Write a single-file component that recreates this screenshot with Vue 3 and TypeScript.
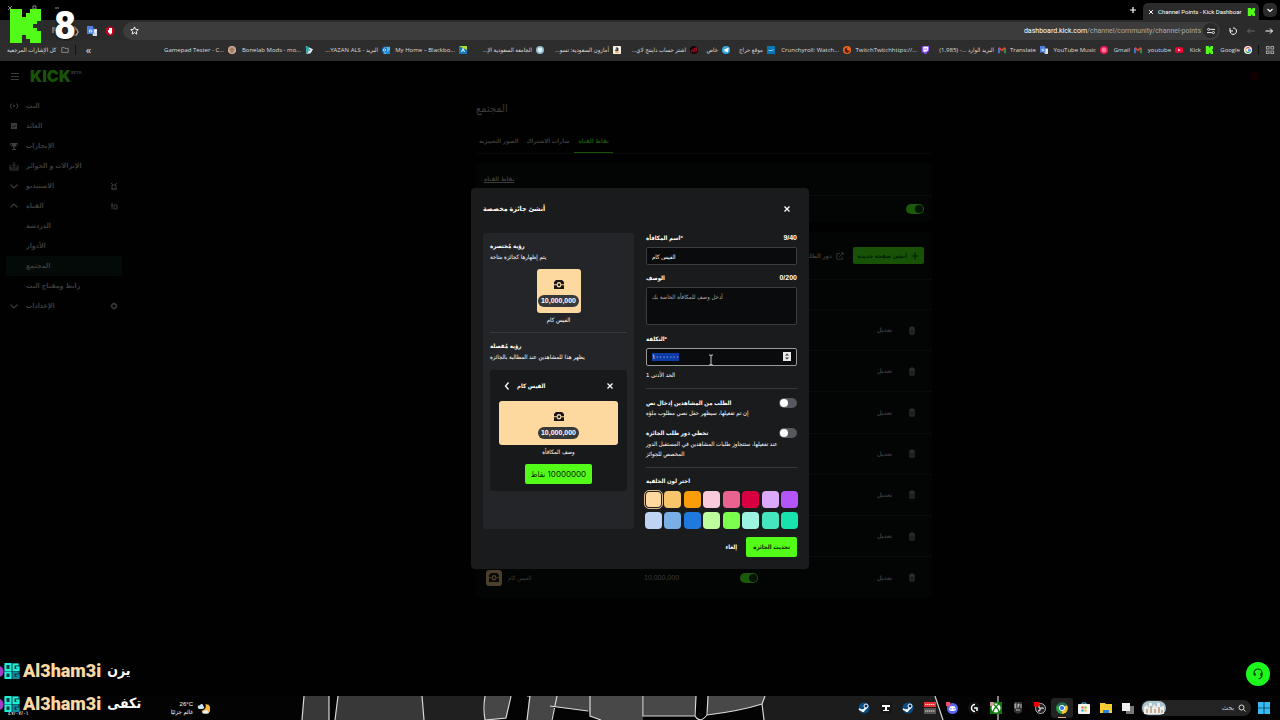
<script setup lang="ts">
import { onMounted, ref } from 'vue'

interface Bookmark { label: string; width: number; icon: string; rtl?: boolean }
interface NavItem { label: string; icon?: string; tail?: string; active?: boolean }
interface Reward { name: string; cost: string }

const bookmarks: Bookmark[] = [
  { label: 'Google', width: 33, icon: 'google' },
  { label: 'Kick', width: 24, icon: 'kick' },
  { label: 'youtube', width: 35, icon: 'youtube' },
  { label: 'Gmail', width: 28, icon: 'gmail' },
  { label: 'YouTube Music', width: 54, icon: 'music' },
  { label: 'Translate', width: 36, icon: 'translate' },
  { label: 'البريد الوارد ...- (1,985)', width: 71, icon: 'gmail', rtl: true },
  { label: 'TwitchTwitchhttps://...', width: 72, icon: 'twitch' },
  { label: 'Crunchyroll: Watch...', width: 70, icon: 'crunchy' },
  { label: 'موقع حراج', width: 39, icon: 'haraj', rtl: true },
  { label: 'خاص', width: 26, icon: 'telegram', rtl: true },
  { label: 'اشتر حساب دايننج لاي...', width: 71, icon: 'chart', rtl: true },
  { label: 'أمازون السعودية: تسو...', width: 71, icon: 'amazon', rtl: true },
  { label: 'الجامعة السعودية الإ...', width: 71, icon: 'globe', rtl: true },
  { label: 'My Home – Blackbo...', width: 71, icon: 'blackboard' },
  { label: '...YAZAN ALS - البريد', width: 71, icon: 'outlook' },
  { label: 'Bonelab Mods - mo...', width: 71, icon: 'bonelab' },
  { label: 'Gamepad Tester - C...', width: 71, icon: 'gamepad' },
]

const nav: NavItem[] = [
  { label: 'البث', icon: 'live' },
  { label: 'العائد', icon: 'card' },
  { label: 'الإنجازات', icon: 'cup' },
  { label: 'الإنزالات و الجوائز', icon: 'drop' },
  { label: 'الاستيديو', icon: 'down', tail: 'tools' },
  { label: 'القناة', icon: 'up', tail: 'people' },
  { label: 'الدردشة' },
  { label: 'الأدوار' },
  { label: 'المجتمع', active: true },
  { label: 'رابط ومفتاح البث' },
  { label: 'الإعدادات', icon: 'down', tail: 'gear' },
]

const rewards: (Reward | null)[] = [null, null, null, null, null, null, { name: 'الفيس كام', cost: '10,000,000' }]

const colours = [
  '#fdd9a0', '#f8c56b', '#f99d0b', '#f9c9dc', '#e8638f', '#d80042', '#dba8fb', '#b455f7',
  '#bfd4f4', '#79aee6', '#2079dc', '#bdff9c', '#7dff4e', '#9bf5e2', '#45e5bf', '#18e2ae',
]

const apps = ['steam', 'tee', 'steam', 'voice', 'discord', 'ghub', 'xbox', 'epic', 'obs', 'chrome', 'store', 'files', 'views']

const name = ref('الفيس كام')
const description = ref('')
const cost = ref('١٠٠٠٠٠٠٠')
const colour = ref(colours[0])
const enabled = ref(true)
const needsText = ref(false)
const skipQueue = ref(false)
const costInput = ref<HTMLInputElement | null>(null)

onMounted(() => {
  costInput.value?.focus()
  costInput.value?.select()
})
</script>

<template>
  <div class="screen">
    <svg class="defs" aria-hidden="true">
      <symbol id="k" viewBox="0 0 31 34"><path fill="currentColor" d="M0 0H12V8H16V4H20V0H31V12H27V15H23V19H27V22H31V34H20V30H16V26H12V34H0Z" /></symbol>
      <symbol id="close" viewBox="0 0 8 8"><path d="M1.500 1.500l5 5M6.500 1.500L1.500 6.500" fill="none" stroke="currentColor" stroke-width="1.300" /></symbol>
      <symbol id="chest" viewBox="0 0 10 9"><path fill="currentColor" d="M2 0H8L10 2V4.200H7.300A2.300 2.300 0 0 0 2.700 4.200H0V2ZM0 5.200H2.700A2.300 2.300 0 0 0 7.300 5.200H10V9H0Z" /><circle cx="5" cy="4.700" r="1.300" fill="currentColor" /></symbol>
      <symbol id="google" viewBox="0 0 10 10"><circle cx="5" cy="5" r="5" fill="#fff" /><g fill="none" stroke-width="1.700"><path d="M2.500 3.300A3 3 0 0 1 7.200 3" stroke="#ea4335" /><path d="M2.500 3.300A3 3 0 0 0 2.600 6.800" stroke="#fbbc05" /><path d="M2.600 6.800A3 3 0 0 0 6.800 7.300" stroke="#34a853" /><path d="M5 5H8Q8 6.500 6.800 7.300" stroke="#4285f4" /></g></symbol>
      <symbol id="kick" viewBox="0 0 10 10"><path fill="#53fc18" d="M1 0H5V2H6V1H7V0H10V4H9V6H10V10H7V9H6V8H5V10H1Z" /></symbol>
      <symbol id="youtube" viewBox="0 0 10 10"><rect y="1.500" width="10" height="7" rx="2" fill="#f03" /><path d="M4 3.500L7 5 4 6.500Z" fill="#fff" /></symbol>
      <symbol id="gmail" viewBox="0 0 10 10"><path d="M1.200 9V2.500" stroke="#4285f4" stroke-width="2" /><path d="M8.800 9V2.500" stroke="#34a853" stroke-width="2" /><path d="M1 2L5 5.500 9 2" fill="none" stroke="#ea4335" stroke-width="2" /></symbol>
      <symbol id="music" viewBox="0 0 10 10"><circle cx="5" cy="5" r="5" fill="#f0134d" /><circle cx="5" cy="5" r="2.500" fill="none" stroke="#fff" stroke-width=".7" /><path d="M4.300 3.700L6.500 5 4.300 6.300Z" fill="#fff" /></symbol>
      <symbol id="translate" viewBox="0 0 10 10"><path d="M4 3H10V10H6Z" fill="#d5dae3" /><path d="M0 0H6L8 8H0Z" fill="#4d7fe0" /><path d="M5 4H2.500V6H5V5H4M6.500 5H9.500M8 4V5L6.500 8M7 6L9 8.500" fill="none" stroke="#fff" stroke-width=".7" /></symbol>
      <symbol id="twitch" viewBox="0 0 10 10"><path d="M2 0H10V6L6 10H4V8H1V2Z" fill="#8d4fff" /><path d="M3 1H9V5L7 7H5L4 8V7H3Z" fill="#fff" /><path d="M5 3V5M7 3V5" stroke="#8d4fff" /></symbol>
      <symbol id="crunchy" viewBox="0 0 10 10"><circle cx="5" cy="5" r="5" fill="#f4661b" /><path d="M8 7A3.300 3.300 0 1 1 6 2A2 2 0 1 0 8.500 5" fill="#512006" /></symbol>
      <symbol id="haraj" viewBox="0 0 10 10"><rect width="10" height="10" fill="#0878b8" /><path d="M2 6Q3 4 4 6Q5 4 6 6Q7 4 8 5" fill="none" stroke="#cceaff" /></symbol>
      <symbol id="telegram" viewBox="0 0 10 10"><circle cx="5" cy="5" r="5" fill="#33a9df" /><path d="M1.500 5L8.500 2 7.300 8 4.500 6.500 3.500 7.500V5.700Z" fill="#fff" /></symbol>
      <symbol id="chart" viewBox="0 0 10 10"><circle cx="5" cy="5" r="5" fill="#160005" /><path d="M2 8V6M4 8V5M6 8V4M8 7V2M1 6L8 2" stroke="#d00c34" /></symbol>
      <symbol id="amazon" viewBox="0 0 10 10"><rect width="10" height="10" rx="1" fill="#f5f0e6" /><path d="M3.500 2.500H6V6.500M6 4H4.500Q3 4.300 3.500 6Q5 7 6 5" fill="none" stroke="#111" stroke-width="1.200" /><path d="M2 7.500Q5 9.500 8 7.500" fill="none" stroke="#f90" /></symbol>
      <symbol id="globe" viewBox="0 0 10 10"><circle cx="5" cy="5" r="5" fill="#8fb9c9" /><circle cx="5" cy="5" r="3" fill="#d9f0f4" /></symbol>
      <symbol id="blackboard" viewBox="0 0 10 10"><path d="M0 0H10V10H0Z" fill="#1576b8" /><path d="M0 0H10V5Z" fill="#b1df25" /><path d="M3 7.500L5 3 7 7.500M4 6H6" fill="none" stroke="#fff" /></symbol>
      <symbol id="outlook" viewBox="0 0 10 10"><path d="M2 1H10V10H2Z" fill="#55b7ee" /><path d="M0 2H6V8H0Z" fill="#0b67bd" /><circle cx="3" cy="5" r="1.500" fill="none" stroke="#fff" /><path d="M6 8L10 5V10H5Z" fill="#128dda" /></symbol>
      <symbol id="bonelab" viewBox="0 0 10 10"><path d="M1 0L10 4 7 9 2 10Z" fill="#e6eef0" /><path d="M1 0L5 2 4 8 2 10Z" fill="#1ba8ae" /><path d="M5 4L7 5 5 6Z" fill="#222" /></symbol>
      <symbol id="gamepad" viewBox="0 0 10 10"><circle cx="5" cy="5" r="5" fill="#dbb59c" /><path d="M1.500 4H8.500M2 6H8M3 2Q5 4 7 2M3 8.500Q5 6 7 8.500" fill="none" stroke="#5a332b" stroke-width=".8" /></symbol>

      <symbol id="live" viewBox="0 0 10 10"><circle cx="5" cy="5" r="1" fill="currentColor" /><path d="M2.500 2.500Q0 5 2.500 7.500M7.500 2.500Q10 5 7.500 7.500" fill="none" stroke="currentColor" /></symbol>
      <symbol id="card" viewBox="0 0 10 10"><path d="M2 2H8V8H2Z" fill="currentColor" /><path d="M3 5L5 6 7 4" fill="none" stroke="#000" stroke-width=".7" /></symbol>
      <symbol id="cup" viewBox="0 0 10 10"><path d="M3 2H7V5L5.500 6.500V8H7V9H3V8H4.500V6.500L3 5Z" fill="currentColor" /><path d="M1.500 2.500H8.500V4L7 5M1.500 2.500V4L3 5" fill="none" stroke="currentColor" /></symbol>
      <symbol id="drop" viewBox="0 0 10 10"><path d="M1 4V9H9V4M1 7H9M5 1V5M3 3.500L5 5.500 7 3.500" fill="none" stroke="currentColor" /></symbol>
      <symbol id="down" viewBox="0 0 10 10"><path d="M1.500 3.500L5 7 8.500 3.500" fill="none" stroke="currentColor" stroke-width="1.200" /></symbol>
      <symbol id="up" viewBox="0 0 10 10"><path d="M1.500 6.500L5 3 8.500 6.500" fill="none" stroke="currentColor" stroke-width="1.200" /></symbol>
      <symbol id="tools" viewBox="0 0 10 10"><path d="M3 4H7V8H3ZM2 2L4 4M8 2L6 4M2 8H8" fill="none" stroke="currentColor" /></symbol>
      <symbol id="people" viewBox="0 0 10 10"><path d="M3 2V8M2 4H4M5 4H8V8H5Z" fill="none" stroke="currentColor" /></symbol>
      <symbol id="gear" viewBox="0 0 10 10"><circle cx="5" cy="5" r="2.300" fill="none" stroke="currentColor" stroke-width="1.400" /><path d="M5 1.500V3M5 7V8.500M1.500 5H3M7 5H8.500" stroke="currentColor" /></symbol>
      <symbol id="trash" viewBox="0 0 8 9"><path d="M1 2H7M3 1H5M2 3H6V8H2ZM4 4V7" fill="none" stroke="currentColor" /></symbol>

      <symbol id="steam" viewBox="0 0 12 12"><circle cx="6" cy="6" r="5.500" fill="#0b4e86" /><path d="M1 7L5 9 9 5" fill="none" stroke="#fff" stroke-width="1.800" /><circle cx="8" cy="4" r="2" fill="#0b2e58" stroke="#fff" /><circle cx="5" cy="8.500" r="1.500" fill="#fff" /></symbol>
      <symbol id="tee" viewBox="0 0 12 12"><rect width="12" height="12" rx="2" fill="#171717" /><path d="M2 3H10V5H7V8H9V9H3V8H5V5H2Z" fill="#fff" /></symbol>
      <symbol id="voice" viewBox="0 0 12 12"><path d="M0 0H12V5H0Z" fill="#e83030" /><path d="M0 6H12V12H0Z" fill="#555" /><path d="M1 2.500H11M1 9H11" stroke="#f4d7d7" stroke-dasharray="1.500 .5" /></symbol>
      <symbol id="discord" viewBox="0 0 12 12"><circle cx="6.500" cy="6.500" r="5.500" fill="#5865f2" /><path d="M4 4.500Q6.500 3.500 9 4.500L10 8 8 9H5L3 8Z" fill="#fff" /><path d="M5 6V7.500M8 6V7.500" stroke="#5865f2" /><circle cx="2" cy="2" r="2.500" fill="#ee5260" /></symbol>
      <symbol id="ghub" viewBox="0 0 12 12"><circle cx="6" cy="6" r="6" fill="#111" /><path d="M7 2.500A3.500 3.500 0 1 0 7 9.500M6 6H9V9" fill="none" stroke="#fff" stroke-width="1.500" /></symbol>
      <symbol id="xbox" viewBox="0 0 12 12"><rect width="12" height="12" fill="#107c10" /><circle cx="6" cy="6" r="4.500" fill="#fff" /><path d="M3 10Q4 6 6 5Q8 6 9 10M3 2Q5 3 6 5Q7 3 9 2" fill="none" stroke="#107c10" stroke-width="1.300" /><circle cx="1.500" cy="1.500" r="2.500" fill="#d99" /></symbol>
      <symbol id="epic" viewBox="0 0 12 12"><path d="M2 0H10V10L6 12 2 10Z" fill="#333" /><path d="M3 2H4.500M3 4H4.500M3 6H4.500M3 2V6M6 6V2H7V4H6M9 2V6M4 8H8" fill="none" stroke="#ddd" stroke-width=".8" /></symbol>
      <symbol id="obs" viewBox="0 0 12 12"><circle cx="6.500" cy="6.500" r="5" fill="#222" stroke="#ddd" stroke-width=".8" /><path d="M6.500 6.500Q4 5 5 3M6.500 6.500Q9 5 9.500 7M6.500 6.500Q6 9 4 9" fill="none" stroke="#ccc" stroke-width="1.300" /><circle cx="2.500" cy="2" r="3" fill="#e00" /></symbol>
      <symbol id="chrome" viewBox="0 0 12 12"><path d="M6 6L1 3A6 6 0 0 1 11 3Z" fill="#226b55" /><path d="M6 6L1 3A6 6 0 0 0 6 12Z" fill="#25a34b" /><path d="M6 6L6 12A6 6 0 0 0 11 3Z" fill="#f4c42b" /><circle cx="6" cy="6" r="2.600" fill="#3479dd" stroke="#fff" /></symbol>
      <symbol id="store" viewBox="0 0 12 12"><path d="M4 2V1H8V2" fill="none" stroke="#4ec0f3" /><rect y="2" width="12" height="10" rx="1" fill="#f2f2f2" /><path d="M3.500 4.500H5.500V6.500H3.500Z" fill="#f25022" /><path d="M6.500 4.500H8.500V6.500H6.500Z" fill="#7fba00" /><path d="M3.500 7.500H5.500V9.500H3.500Z" fill="#00a4ef" /><path d="M6.500 7.500H8.500V9.500H6.500Z" fill="#ffb900" /></symbol>
      <symbol id="files" viewBox="0 0 12 12"><path d="M0 1H5L6 2H12V11H0Z" fill="#f9c933" /><path d="M3 8H9V11H3Z" fill="#2383d5" /></symbol>
      <symbol id="views" viewBox="0 0 12 12"><path d="M4 4H12V12H4Z" fill="#777" /><path d="M0 1H8V9H0Z" fill="#eee" /></symbol>
    </svg>

    <header class="browser">
      <div class="tabstrip">
        <div class="window-buttons" aria-hidden="true">
          <svg viewBox="0 0 60 10"><path d="M8 1l4 4M12 1L8 5M33 1H36V4H33ZM55 3H59" fill="none" stroke="#888" /></svg>
        </div>
        <button class="plain new-tab" aria-label="New tab"><svg viewBox="0 0 8 8"><path d="M4 1V7M1 4H7" stroke="currentColor" stroke-width="1.200" /></svg></button>
        <div class="tab">
          <button class="plain" aria-label="Close tab"><svg class="x-small"><use href="#close" /></svg></button>
          <span>Channel Points - Kick Dashboar</span>
          <svg class="fav"><use href="#kick" /></svg>
        </div>
        <button class="plain tab-list" aria-label="Tabs"><svg viewBox="0 0 8 8"><path d="M1.500 3L4 5.500 6.500 3" fill="none" stroke="currentColor" stroke-width="1.200" /></svg></button>
      </div>
      <div class="toolbar">
        <div class="extensions">
          <svg viewBox="0 0 10 10"><path d="M1 2H6M1 4H5M1 6H3M7 8V2L9 1" fill="none" stroke="#bbb" /><circle cx="6" cy="8" r="1.200" fill="#bbb" /></svg>
          <svg viewBox="0 0 10 10"><path d="M2 3H4V1H6V3H8V5H9V7H8V9H2Z" fill="none" stroke="#bbb" /></svg>
          <svg><use href="#translate" /></svg>
          <svg viewBox="0 0 10 10"><circle cx="5" cy="5" r="4.500" fill="#c90019" /><path d="M3 4H4V2H7V7L5.500 8.500 3 6Z" fill="#fff" /></svg>
        </div>
        <div class="omnibox">
          <button class="plain" aria-label="Bookmark"><svg class="star" viewBox="0 0 10 10"><path d="M5 1L6.200 3.800 9.200 4 7 6 7.600 9 5 7.400 2.400 9 3 6 .8 4 3.800 3.800Z" fill="none" stroke="currentColor" /></svg></button>
          <span class="url">dashboard.kick.com<i>/channel/community/channel-points</i></span>
          <span class="site"><svg viewBox="0 0 10 10"><path d="M4 3H10M0 7H6" stroke="currentColor" stroke-width="1.200" /><circle cx="2" cy="3" r="1.300" fill="none" stroke="currentColor" /><circle cx="8" cy="7" r="1.300" fill="none" stroke="currentColor" /></svg></span>
        </div>
        <div class="history">
          <button class="plain" aria-label="Reload"><svg viewBox="0 0 10 10"><path d="M2 2V5H5M2.200 4.500A3.200 3.200 0 1 0 5 2" fill="none" stroke="currentColor" /></svg></button>
          <button class="plain dim" aria-label="Forward"><svg viewBox="0 0 10 10"><path d="M9 5H1.500M4 2.500L1.500 5 4 7.500" fill="none" stroke="currentColor" /></svg></button>
          <button class="plain" aria-label="Back"><svg viewBox="0 0 10 10"><path d="M1.500 5H8.500M6 2.500L8.500 5 6 7.500" fill="none" stroke="currentColor" /></svg></button>
        </div>
      </div>
      <nav class="bookmarks" aria-label="Bookmarks">
        <svg class="grid-icon" viewBox="0 0 10 10"><path d="M1.500 1.500H4V4H1.500ZM6 1.500H8.500V4H6ZM1.500 6H4V8.500H1.500ZM6 6H8.500V8.500H6Z" fill="none" stroke="#999" stroke-width="1.200" /></svg>
        <span class="rule"></span>
        <a v-for="b in bookmarks" :key="b.label" class="bookmark" href="#" :style="{ width: b.width + 'px' }">
          <svg><use :href="'#' + b.icon" /></svg>
          <span :dir="b.rtl ? 'rtl' : 'ltr'">{{ b.label }}</span>
        </a>
        <span class="grow"></span>
        <button class="plain more" aria-label="More bookmarks">«</button>
        <span class="rule"></span>
        <a class="bookmark folder" href="#">
          <svg viewBox="0 0 10 8"><path d="M1 1H4L5 2H9V7H1Z" fill="none" stroke="#999" /></svg>
          <span>كل الإشارات المرجعية</span>
        </a>
      </nav>
    </header>

    <div class="page">
      <div class="site-head">
        <button class="plain" aria-label="Menu"><svg class="menu" viewBox="0 0 10 10"><path d="M1 2.500H9M1 5.500H9M1 8.500H9" stroke="currentColor" /></svg></button>
        <a class="logo" href="#">KICK<sup>BETA</sup></a>
        <span class="avatar"></span>
      </div>
      <div class="columns">
        <nav class="sidebar" aria-label="Dashboard">
          <a v-for="item in nav" :key="item.label" href="#" :class="{ active: item.active }">
            <svg class="nav-icon"><use v-if="item.icon" :href="'#' + item.icon" /></svg>
            <span>{{ item.label }}</span>
            <svg v-if="item.tail" class="nav-icon"><use :href="'#' + item.tail" /></svg>
          </a>
        </nav>
        <main>
          <div class="content">
            <h1>المجتمع</h1>
            <div class="tabs">
              <a href="#">الصور التعبيرية</a>
              <a href="#">شارات الاشتراك</a>
              <a href="#" class="current">نقاط القناة</a>
            </div>
            <section class="card">
              <h2>نقاط القناة</h2>
              <div class="card-row"><input v-model="enabled" type="checkbox" class="switch dark" aria-label="نقاط القناة" /></div>
            </section>
            <section class="card">
              <div class="card-actions">
                <a href="#">دور الطلبات <svg viewBox="0 0 10 10"><path d="M5 2H1V9H8V6M6 1H9V4M9 1L4 6" fill="none" stroke="currentColor" /></svg></a>
                <button class="create">أنشئ صفحة جديدة <svg viewBox="0 0 10 10"><path d="M5 1V9M1 5H9" stroke="currentColor" stroke-width="1.500" /></svg></button>
              </div>
              <table>
                <colgroup><col class="c-name" /><col class="c-cost" /><col class="c-on" /><col class="c-edit" /><col /></colgroup>
                <thead><tr><th colspan="5"></th></tr></thead>
                <tbody>
                  <tr v-for="(r, i) in rewards" :key="i">
                    <td><span v-if="r" class="reward"><i><svg><use href="#chest" /></svg></i>{{ r.name }}</span></td>
                    <td>{{ r?.cost }}</td>
                    <td><input v-if="r" type="checkbox" checked class="switch dark" :aria-label="r.name" /></td>
                    <td><a class="edit" href="#">تعديل</a></td>
                    <td><button class="plain" aria-label="Delete"><svg class="trash"><use href="#trash" /></svg></button></td>
                  </tr>
                </tbody>
              </table>
            </section>
          </div>
        </main>
      </div>

      <div class="overlay">
        <form class="modal" role="dialog" aria-labelledby="dialog-title" @submit.prevent>
          <div class="modal-head">
            <h2 id="dialog-title">أنشئ جائزة مخصصة</h2>
            <button type="button" class="plain" aria-label="Close"><svg class="x"><use href="#close" /></svg></button>
          </div>
          <div class="modal-body">
            <aside class="previews">
              <h3>رؤية مُختصرة</h3>
              <p>يتم إظهارها كجائزة متاحة</p>
              <div class="tile"><svg><use href="#chest" /></svg><span class="pill">10,000,000</span></div>
              <p class="center">{{ name }}</p>
              <hr />
              <h3>رؤية مُفصلة</h3>
              <p>يظهر هذا للمشاهدين عند المطالبة بالجائزة</p>
              <div class="detail">
                <div class="detail-head">
                  <svg viewBox="0 0 8 10"><path d="M5.500 1.500L2.500 5 5.500 8.500" fill="none" stroke="#fff" stroke-width="1.300" /></svg>
                  <strong>{{ name }}</strong>
                  <svg class="x"><use href="#close" /></svg>
                </div>
                <div class="tile banner"><svg><use href="#chest" /></svg><span class="pill">10,000,000</span></div>
                <p class="center">وصف المكافأة</p>
                <button type="button" class="green redeem" dir="rtl">10000000 نقاط</button>
              </div>
            </aside>

            <div class="fields">
              <div class="label"><label for="reward-name">اسم المكافأة*</label><span>9/40</span></div>
              <input id="reward-name" v-model="name" class="box" type="text" />
              <div class="label"><label for="reward-text">الوصف</label><span>0/200</span></div>
              <textarea id="reward-text" v-model="description" class="box" placeholder="أدخل وصف للمكافأة الخاصة بك"></textarea>
              <div class="label"><label for="reward-cost">التكلفة*</label></div>
              <div class="number">
                <input id="reward-cost" ref="costInput" v-model="cost" class="box" type="text" inputmode="numeric" />
                <svg class="spin" viewBox="0 0 8 9"><path d="M0 0H8V9H0Z" fill="#e8e8e8" /><path d="M2 3.500L4 1.500 6 3.500ZM2 5.500L4 7.500 6 5.500Z" fill="#333" /></svg>
                <svg class="ibeam" viewBox="0 0 6 12"><path d="M1 1H2.500L3 2 3.500 1H5M3 2V10M1 11H2.500L3 10 3.500 11H5" fill="none" stroke="#ccc" /></svg>
              </div>
              <p>الحد الأدنى 1</p>
              <hr />
              <div class="option">
                <label for="needs-text">الطلب من المشاهدين إدخال نص</label>
                <input id="needs-text" v-model="needsText" type="checkbox" class="switch" />
              </div>
              <p>إن تم تفعيلها، سيظهر حقل نصي مطلوب ملؤه</p>
              <div class="option second">
                <label for="skip-queue">تخطي دور طلب الجائزة</label>
                <input id="skip-queue" v-model="skipQueue" type="checkbox" class="switch" />
              </div>
              <p class="skip-note">عند تفعيلها، ستتجاوز طلبات المشاهدين في المستقبل الدور<br />المخصص للجوائز</p>
              <hr />
              <fieldset>
                <legend>اختر لون الخلفية</legend>
                <div class="swatches">
                  <input v-for="c in colours" :key="c" v-model="colour" type="radio" name="colour" :value="c" :aria-label="c" :style="{ background: c }" />
                </div>
              </fieldset>
              <div class="actions">
                <button type="button" class="plain cancel">إلغاء</button>
                <button class="green">تحديث الجائزة</button>
              </div>
            </div>
          </div>
        </form>
      </div>

      <button class="help" aria-label="Help"><svg viewBox="0 0 14 14"><path d="M3 8V6A4 4 0 0 1 11 6V8Q11 11 7.500 12M4 6V9M10 6V9" fill="none" stroke="#053a05" stroke-width="1.200" /></svg></button>
    </div>

    <footer class="taskbar">
      <svg class="sketch" viewBox="0 0 700 24" preserveAspectRatio="xMinYMin slice" aria-hidden="true">
        <path d="M4 0H29V24H2ZM38 0H122L124 24H35Z" fill="#383838" />
        <path d="M122 0H184V24H124Z" fill="#202020" />
        <path d="M185 0H210L206 23 185 24ZM229 0H257L251 24H227ZM257 0H291V20L288 15 254 11Z" fill="#464646" />
        <path d="M291 0H343V24H301L291 20ZM344 0H396L394 20H344ZM408 0H465L462 8Q440 15 408 19Z" fill="#484848" />
        <path d="M465 0H635L643 24H464L462 8Z" fill="#1c1c1c" />
        <path d="M4 0L2 24M29 0V24M38 0L35 24M122 0L124 24M185 0Q183 12 185 24L206 22 211 0M227 0H230L227 24M257 0L252 24M250 10L288 15M290 0V20L301 24M343 0V20H395L396 0M408 0L407 19Q400 28 395 20M407 19Q440 15 462 8L465 0M462 8L464 24M635 0L643 24M698 0V24" fill="none" stroke="#d8d8d8" stroke-width="1.200" />
      </svg>
      <span class="clock">٤٧/٠٧/٠١</span>
      <div class="weather">
        <div>26°C<br />غائم جزئيًا</div>
        <svg viewBox="0 0 14 13"><path d="M9 2A5 5 0 1 1 5 9A5 5 0 0 0 9 2Z" fill="#f6b73f" /><path d="M1 6Q0 3 3 3Q6 0 7 4Q9 6 6 7H2Z" fill="#cbdff5" /><path d="M6 12Q5 9 8 9Q11 7 12 10Q14 11 12 12Z" fill="#e8eef7" /></svg>
      </div>
      <div class="apps">
        <button v-for="(a, i) in apps" :key="i" class="plain app" :class="a" :aria-label="a"><svg><use :href="'#' + a" /></svg></button>
      </div>
      <div class="search">
        <svg class="city" viewBox="0 0 24 14"><rect width="24" height="14" rx="7" fill="#a9c5d1" /><path d="M2 13V6L5 4 7 8V2H10V7L12 3 15 7V2H18V6L22 5V13Z" fill="#f0eee5" /><path d="M5 12V8M9 12V5M13 12V8M17 12V6M20 12V9" stroke="#8a735d" /></svg>
        <input type="text" aria-label="بحث" placeholder="بحث" />
        <svg class="lens" viewBox="0 0 8 8"><circle cx="3.500" cy="3.500" r="2.500" fill="none" stroke="#ddd" /><path d="M5.500 5.500L7.500 7.500" stroke="#ddd" /></svg>
      </div>
      <button class="plain start" aria-label="Start"><svg viewBox="0 0 12 12"><path d="M0 0H5.700V5.700H0ZM6.300 0H12V5.700H6.300ZM0 6.300H5.700V12H0ZM6.300 6.300H12V12H6.300Z" fill="#35baf5" /></svg></button>
    </footer>

    <div class="stream-badge"><svg><use href="#k" /></svg><span>8</span></div>
    <div class="chat">
      <p v-for="m in ['يزن', 'تكفى']" :key="m">
        <svg viewBox="0 0 20 16"><path d="M0 3A6 6 0 0 1 0 14Z" fill="#a33cc0" /><rect x="4" width="16" height="16" rx="2" fill="#063e46" /><path d="M5.500 1H10.500V7H5.500ZM18.500 1.500H13.500V7H18.500V4.500H16M5.500 9.500H10.500V15H5.500Z" fill="none" stroke="#22efd8" stroke-width="2" /><path d="M18.500 9.500H13.500V15H18.500V12.500H16" fill="none" stroke="#128ba0" stroke-width="2" /></svg>
        <b>Al3ham3i</b><span>{{ m }}</span>
      </p>
    </div>
  </div>
</template>

<style>
html, body { background: #000; }
</style>

<style scoped>
* { box-sizing: border-box; }
.screen { position: relative; display: flex; flex-direction: column; min-height: 100vh; overflow: hidden; background: #000; color: #fff; font: 7px/10px "Liberation Sans", "DejaVu Sans Condensed", "DejaVu Sans", sans-serif; }
.defs { position: absolute; width: 0; height: 0; }
h1, h2, h3, p, fieldset, legend { margin: 0; padding: 0; border: 0; font-size: inherit; }
a { color: inherit; text-decoration: none; }
button, input, textarea { font: inherit; color: inherit; }
button { cursor: pointer; white-space: nowrap; }
svg { display: block; flex: none; }
.plain { display: flex; align-items: center; justify-content: center; padding: 0; border: 0; background: none; }

.browser { font-family: "Open Sans", "DejaVu Sans Condensed", "DejaVu Sans", sans-serif; }
.tabstrip { display: flex; align-items: flex-end; height: 20px; padding-right: 3px; gap: 4px; }
.window-buttons { margin-right: auto; align-self: center; }
.window-buttons svg { width: 60px; height: 10px; }
.new-tab { width: 12px; height: 20px; }
.new-tab svg, .tab-list svg { width: 8px; height: 8px; }
.tab { display: flex; align-items: center; gap: 4px; width: 116px; height: 17px; padding: 0 4px 0 5px; border-radius: 5px 5px 0 0; background: #2b2b2b; }
.tab span { flex: 1; white-space: nowrap; font-family: Roboto, sans-serif; font-size: 6px; }
.x-small { width: 6px; height: 6px; }
.fav { width: 8px; height: 8px; }
.tab-list { width: 14px; height: 14px; margin-bottom: 3px; border-radius: 5px; background: #2b2b2b; }
.toolbar { display: flex; align-items: center; height: 21px; background: #2b2b2b; }
.extensions { display: flex; justify-content: flex-end; gap: 8px; width: 123px; padding-right: 8px; }
.extensions svg { width: 10px; height: 10px; }
.omnibox { display: flex; flex: 1; align-items: center; height: 18px; padding: 0 2px 0 7px; border-radius: 9px; background: #3c3c3c; }
.star { width: 9px; height: 9px; }
.url { margin-left: auto; font-family: Roboto, sans-serif; font-size: 7px; }
.url i { font-style: normal; color: #aaa; }
.site { display: flex; align-items: center; justify-content: center; width: 15px; height: 15px; margin-left: 2px; border-radius: 50%; background: #292929; }
.site svg { width: 8px; height: 8px; }
.history { display: flex; gap: 8px; width: 60px; padding-left: 8px; }
.history svg { width: 10px; height: 10px; }
.dim { color: #666; }
.bookmarks { display: flex; flex-direction: row-reverse; align-items: center; gap: 6px; height: 20px; padding: 0 5px 2px 7px; background: #2d2d2d; font-size: 6px; color: #ddd; }
.bookmark { display: flex; flex-direction: row-reverse; align-items: center; gap: 4px; white-space: nowrap; }
.bookmark svg { width: 8px; height: 8px; }
.folder { gap: 5px; }
.grid-icon { width: 10px; height: 10px; }
.rule { width: 1px; height: 10px; background: #111; }
.grow { flex: 1; }
.more { width: 12px; font-size: 11px; }

.page { position: relative; flex: 1; display: flex; flex-direction: column; background: #010101; color: #3b3b3b; }
.site-head { display: flex; align-items: center; height: 35px; padding: 0 20px 6px 10px; }
.menu { width: 10px; height: 10px; }
.logo { margin-left: 10px; color: #175207; font: 900 16px/20px Inter, sans-serif; }
.logo sup { font-size: 4px; line-height: 4px; vertical-align: 8px; color: #333; }
.avatar { width: 10px; height: 10px; margin-left: auto; border-radius: 50%; background: #100000; }
.columns { display: flex; flex: 1; }
.sidebar { width: 128px; padding: 0 6px; }
.sidebar a { display: flex; align-items: center; gap: 7px; height: 20px; padding: 0 3px; font-weight: 700; }
.sidebar .active { background: #040a08; }
.sidebar span { flex: 1; }
.nav-icon { width: 10px; height: 10px; }
main { flex: 1; display: flex; justify-content: center; }
.content { width: 456px; }
h1 { padding-top: 2px; font-size: 11px; line-height: 20px; font-weight: 400; }
.tabs { display: flex; align-items: flex-end; gap: 2px; height: 36px; margin-bottom: 9px; border-bottom: 1px solid #080a0a; }
.tabs a { padding: 0 3px 7px; font-weight: 700; font-size: 6px; }
.tabs .current { padding: 0 4px 6px; border-bottom: 1px solid #175207; color: #175207; }
.card { margin-bottom: 10px; background: #030504; border-radius: 3px; }
.card h2 { padding: 11px 8px; line-height: 10px; font-size: 6px; text-decoration: underline; }
.card-row { display: flex; align-items: center; justify-content: flex-end; height: 27px; padding-right: 8px; border-top: 1px solid #080b0a; }
.card-actions { display: flex; align-items: center; justify-content: flex-end; gap: 9px; height: 47px; padding: 0 8px; }
.card-actions a, .create { display: flex; align-items: center; gap: 4px; font-weight: 700; font-size: 6px; }
.card-actions svg { width: 8px; height: 8px; }
.create { height: 17px; padding: 0 5px; border: 0; border-radius: 2px; background: #175207; color: #020; }
table { width: 100%; height: 319px; border-collapse: collapse; table-layout: fixed; }
th { height: 30px; padding: 0; border-top: 1px solid #080b0a; }
td { height: 41px; padding: 0; border-top: 1px solid #080b0a; }
td:first-child { padding-left: 10px; }
.c-name { width: 168px; }
.c-cost { width: 96px; }
.c-on { width: 137px; }
.c-edit { width: 31px; }
.edit { font-weight: 700; font-size: 6px; }
.reward { display: flex; align-items: center; gap: 6px; font-size: 6px; }
.reward i { display: flex; align-items: center; justify-content: center; width: 16px; height: 16px; border-radius: 3px; background: #4b3e2b; color: #0b0a08; }
.reward svg { width: 10px; height: 9px; }
.trash { width: 8px; height: 9px; }

.switch { appearance: none; display: block; flex: none; width: 18px; height: 10px; margin: 0; padding: 1px; border-radius: 5px; background: #55585c; }
.switch::before { content: ""; display: block; width: 8px; height: 8px; border-radius: 50%; background: #fff; }
.switch:checked::before { margin-left: auto; }
.switch.dark { background: #1b5a0a; }
.switch.dark::before { background: #071304; }

.overlay { position: absolute; inset: 0; display: flex; align-items: center; justify-content: center; color: #fff; }
.modal { width: 338px; padding: 12px; border-radius: 4px; background: #191b1d; }
.modal-head { display: flex; align-items: center; justify-content: space-between; height: 18px; margin-bottom: 15px; padding-right: 6px; }
.x { width: 8px; height: 8px; }
.modal-body { display: grid; grid-template-columns: 151px 151px; gap: 12px; }
.modal p { font-size: 6px; }
hr { width: 100%; height: 1px; margin: 8px 0; border: 0; background: #37393c; }
.previews { height: 296px; padding: 7px; border-radius: 3px; background: #232528; }
.previews h3 { font-size: 6px; line-height: 12px; }
.tile { display: flex; flex-direction: column; align-items: center; justify-content: flex-end; gap: 6px; width: 44px; height: 44px; margin: 7px auto 2px; padding-bottom: 6px; border-radius: 3px; background: #fdd9a0; color: #171717; }
.tile svg { width: 10px; height: 9px; }
.pill { padding: 0 3px; border-radius: 6px; background: #36383a; color: #fff; font: 700 7px/12px "Liberation Sans", sans-serif; }
.center { text-align: center; }
.previews hr { margin: 7px 0; }
.detail { margin-top: 8px; padding: 8px 9px 7px; border-radius: 3px; background: #17191a; }
.detail-head { display: flex; align-items: center; gap: 6px; height: 15px; padding: 0 4px; }
.detail-head svg { width: 8px; height: 10px; }
.detail-head .x { height: 8px; margin-left: auto; }
.detail-head strong { font-size: 6px; }
.banner { width: 100%; margin-top: 8px; }
.green { height: 20px; padding: 0 7px; border: 0; border-radius: 2px; background: #53fc18; color: #082402; }
.redeem { display: block; margin: 7px auto 0; padding: 0 6px; font-family: Inter, "DejaVu Sans Condensed", "DejaVu Sans", sans-serif; font-size: 8px; }

.fields { display: flex; flex-direction: column; }
.label { display: flex; justify-content: space-between; height: 10px; margin-bottom: 4px; font-weight: 700; font-size: 6px; }
.label span { font-size: 7px; }
.box { display: block; width: 100%; height: 18px; margin: 0 0 8px; padding: 0 5px; border: 1px solid #3b3d40; border-radius: 2px; outline: 0; background: #0a0b0c; font-size: 6px; }
textarea.box { height: 38px; margin-bottom: 9px; padding: 4px 5px; resize: none; line-height: 10px; }
.box::placeholder { color: #aaa; opacity: 1; }
.number { position: relative; margin-bottom: 4px; }
.number .box { margin: 0; border-color: #999; font-size: 7px; }
.number .box::selection { background: #0d3ba5; color: #fff; }
.spin { position: absolute; right: 6px; top: 4px; width: 8px; height: 9px; }
.ibeam { position: absolute; left: 62px; top: 6px; width: 6px; height: 12px; }
.option { display: flex; align-items: center; justify-content: space-between; height: 11px; font-weight: 700; font-size: 6px; }
.second { margin-top: 9px; }
.skip-note { padding-top: 1px; white-space: nowrap; }
legend { margin-bottom: 5px; font-weight: 700; font-size: 6px; }
.swatches { display: grid; grid-template-columns: repeat(8, 17px); justify-content: space-between; gap: 4px 0; margin: 0 -1px; }
.swatches input { appearance: none; width: 17px; height: 17px; margin: 0; border-radius: 4px; }
.swatches input:checked { border: 1px solid #28221a; outline: 1px solid #d6b98b; }
.actions { display: flex; justify-content: flex-end; gap: 9px; margin-top: 8px; }
.actions button { font-weight: 700; font-size: 6px; }
.help { position: absolute; right: 10px; bottom: 10px; display: flex; align-items: center; justify-content: center; width: 24px; height: 24px; padding: 0; border: 0; border-radius: 50%; background: #1cf71c; }
.help svg { width: 14px; height: 14px; }

.taskbar { position: relative; display: flex; align-items: center; height: 24px; padding: 0 10px 0 8px; background: #030303; font-size: 6px; line-height: 8px; overflow: hidden; }
.sketch { position: absolute; left: 300px; top: 0; width: 700px; height: 24px; }
.clock { width: 154px; padding-bottom: 3px; align-self: flex-end; }
.weather { display: flex; align-items: center; gap: 4px; text-align: right; }
.weather > div { width: 31px; white-space: nowrap; }
.weather svg { width: 13px; height: 13px; }
.apps { position: relative; display: flex; margin-left: auto; }
.app { position: relative; width: 22px; height: 20px; }
.app svg { width: 12px; height: 12px; }
.app.chrome { border-radius: 3px; background: #222; }
.app.chrome::after { content: ""; position: absolute; bottom: 0; width: 8px; height: 1px; background: #e0b080; }
.search { position: relative; display: flex; align-items: center; gap: 4px; width: 110px; height: 16px; margin-left: 2px; padding: 0 5px 0 1px; border-radius: 8px; background: #242424; }
.city { width: 24px; height: 14px; }
.search input { flex: 1; min-width: 0; padding: 0; border: 0; outline: 0; background: none; text-align: right; font-size: 7px; }
.search input::placeholder { color: #ccc; opacity: 1; }
.lens { width: 8px; height: 8px; }
.start { margin-left: 7px; }
.start svg { width: 12px; height: 12px; }

.stream-badge { position: absolute; left: 10px; top: 9px; display: flex; align-items: center; gap: 13px; color: #53fc18; }
.stream-badge svg { width: 31px; height: 34px; }
.stream-badge span { color: #fff; font: 900 38px/32px Roboto, sans-serif; text-shadow: 0 0 2px #000, 0 0 2px #000; }
.chat { position: absolute; left: 0; bottom: 0; }
.chat p { display: flex; align-items: center; height: 33px; font: 700 18px/33px Roboto, "DejaVu Sans Condensed", "DejaVu Sans", sans-serif; text-shadow: 0 0 2px #000, 1px 1px 1px #000; }
.chat svg { width: 20px; height: 16px; margin-right: 3px; }
.chat b { margin-right: 6px; color: #f8d9a5; }
.chat span { font-size: 14px; }
</style>
